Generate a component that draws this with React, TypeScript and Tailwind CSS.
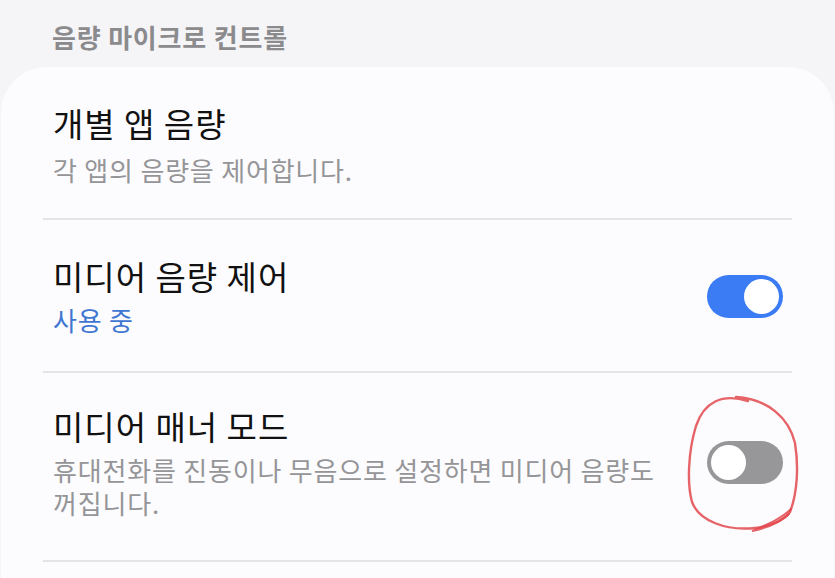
import React from "react";

const font = { fontFamily: '"Noto Sans CJK KR", "Noto Sans", sans-serif' };

function Toggle({ on }: { on: boolean }) {
  return (
    <div
      className={`relative h-[43px] w-[76px] shrink-0 rounded-full ${on ? "bg-[#3b7cf4]" : "bg-[#97979a]"}`}
    >
      <div
        className={`absolute top-[4px] h-[35px] w-[35px] rounded-full bg-white ${on ? "right-[4px]" : "left-[4px]"}`}
      />
    </div>
  );
}

export default function App() {
  return (
    <div
      className="relative h-[578px] w-[835px] overflow-hidden bg-[#f5f5f7]"
      style={font}
    >
      <div className="pl-[52px] pt-[20px] text-[26px] font-bold leading-[33px] tracking-[0.8px] text-[#8b8b8e]">
        음량 마이크로 컨트롤
      </div>

      <div className="mx-[1px] mt-[14px] h-[600px] rounded-t-[46px] bg-[#fcfcfe]">
        {/* Item 1 */}
        <div className="pb-[32px] pl-[52px] pr-[51px] pt-[36px]">
          <div className="text-[33px] leading-[40px] tracking-[1px] text-[#111111]">개별 앱 음량</div>
          <div className="mt-[10px] text-[26px] leading-[33px] tracking-[0.8px] text-[#959598]">
            각 앱의 음량을 제어합니다.
          </div>
        </div>
        <div className="mx-[42px] h-[2px] bg-[#e4e4e6]" />

        {/* Item 2 */}
        <div className="flex items-center justify-between pb-[35px] pl-[52px] pr-[51px] pt-[36px]">
          <div>
            <div className="text-[33px] leading-[40px] tracking-[1px] text-[#111111]">미디어 음량 제어</div>
            <div className="mt-[7px] text-[26px] leading-[33px] tracking-[0.8px] text-[#3f76d2]">사용 중</div>
          </div>
          <Toggle on={true} />
        </div>
        <div className="mx-[42px] h-[2px] bg-[#e4e4e6]" />

        {/* Item 3 */}
        <div className="flex items-center justify-between pb-[41px] pl-[52px] pr-[51px] pt-[33px]">
          <div>
            <div className="text-[33px] leading-[40px] tracking-[1px] text-[#111111]">미디어 매너 모드</div>
            <div className="mt-[7px] w-[620px] text-[26px] leading-[33px] tracking-[0.8px] text-[#959598]">
              휴대전화를 진동이나 무음으로 설정하면 미디어 음량도 꺼집니다.
            </div>
          </div>
          <Toggle on={false} />
        </div>
        <div className="mx-[42px] h-[2px] bg-[#e4e4e6]" />
      </div>

      {/* hand-drawn red annotation */}
      <svg
        className="pointer-events-none absolute left-0 top-0"
        width="835"
        height="578"
        viewBox="0 0 835 578"
      >
        <path
          d="M 748 401 C 722 393, 704 402, 696 426 C 688 452, 687 484, 692 502 C 699 521, 726 531, 755 528 C 772 526, 785 519, 790 512 C 797 494, 799 468, 795 443 C 789 418, 768 399, 736 397"
          fill="none"
          stroke="#e2484d"
          strokeWidth="2.4"
          strokeLinecap="round"
          opacity="0.85"
        />
        <path
          d="M 791 509 C 781 519, 766 525, 752 531 C 766 528, 781 522, 789 514"
          fill="none"
          stroke="#e2484d"
          strokeWidth="2"
          strokeLinecap="round"
          opacity="0.85"
        />
      </svg>
    </div>
  );
}
